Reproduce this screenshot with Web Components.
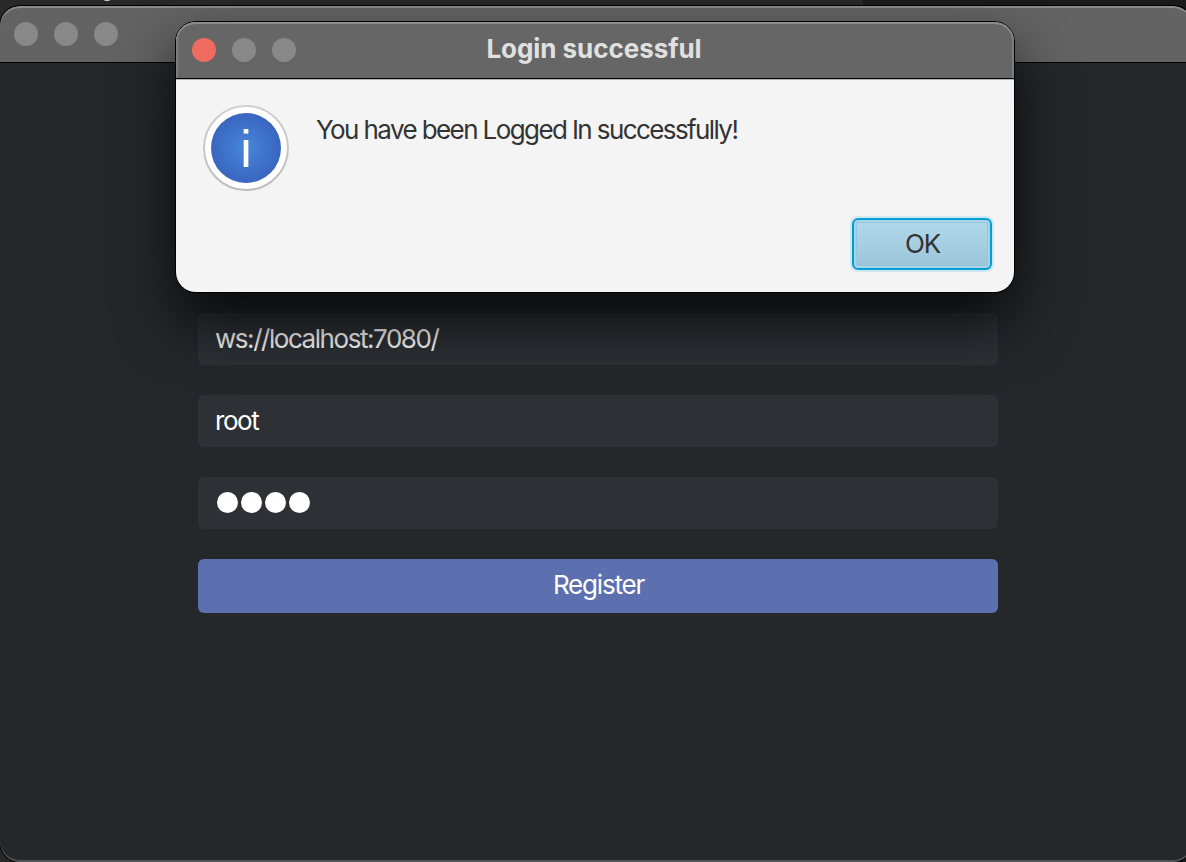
<!DOCTYPE html>
<html lang="en">
<head>
<meta charset="utf-8">
<title>Login</title>
<style>
  html, body { margin: 0; height: 100%; overflow: hidden; background: #1a1a1a; }
  body { font-family: Inter, "Liberation Sans", sans-serif; }
</style>
</head>
<body>
<app-desktop></app-desktop>
<script>
  function define(name, html) {
    const template = document.createElement('template');
    template.innerHTML = html;
    customElements.define(name, class extends HTMLElement {
      constructor() {
        super();
        this.attachShadow({ mode: 'open' }).appendChild(template.content.cloneNode(true));
      }
    });
  }

  define('traffic-lights', `
    <style>
      :host { display: flex; gap: 16px; }
      i { width: 24px; height: 24px; border-radius: 50%; background: var(--dot, #888); }
      i:first-of-type { background: var(--close, var(--dot, #888)); }
    </style><i></i><i></i><i></i>`);

  define('text-input', `
    <style>
      :host { display: flex; align-items: center; box-sizing: border-box; height: 52px; padding: 0 17px;
        border-radius: 6px; background: #2d3035; color: #fff; font-size: 26px; line-height: 32px; letter-spacing: -1.45px; white-space: nowrap; }
    </style><slot></slot>`);

  define('password-dots', `
    <style>
      :host { display: flex; gap: 3.1px; margin: -1px 0 0 1.6px; }
      i { width: 21px; height: 21px; border-radius: 50%; background: #fff; }
    </style><i></i><i></i><i></i><i></i>`);

  define('primary-button', `
    <style>
      :host { display: flex; align-items: center; justify-content: center; box-sizing: border-box; height: 54px; padding: 0 0 2px 1px; border-radius: 6px;
        background: #5c6fae; color: #fff; font-size: 26px; line-height: 32px; letter-spacing: -1.2px; }
    </style><slot></slot>`);

  define('ok-button', `
    <style>
      :host { display: flex; align-items: center; justify-content: center; box-sizing: border-box; width: 140px; height: 52px; padding: 0 0 2px 1px;
        border: 2px solid #039ed3; border-radius: 6px; color: #333; font-size: 26px; letter-spacing: -1.1px;
        background: linear-gradient(#b0daec, #9bc3d7);
        box-shadow: 0 0 0 2px #cfe7f0, inset 0 0 0 2px #a9d3e5, inset 0 0 0 3px #95c6dd; }
    </style><slot></slot>`);

  define('info-icon', `
    <style>:host { display: block; width: 86px; height: 86px; } svg { display: block; }</style>
    <svg width="86" height="86" viewBox="0 0 86 86">
      <defs>
        <radialGradient id="b"><stop offset="0" stop-color="#4787d8"/><stop offset="1" stop-color="#3966c0"/></radialGradient>
        <linearGradient id="r" x2="0" y2="1"><stop offset="0" stop-color="#d0d0d0"/><stop offset="1" stop-color="#bcbcbc"/></linearGradient>
      </defs>
      <circle cx="43" cy="43" r="42" fill="#fff" stroke="url(#r)" stroke-width="2"/>
      <circle cx="43" cy="43" r="35" fill="url(#b)"/>
      <text x="43" y="62" text-anchor="middle" font-family="Liberation Sans" font-size="52" fill="#fff">i</text>
    </svg>`);

  define('login-window', `
    <style>
      :host { display: flex; flex-direction: column; box-sizing: border-box; width: 1193px; height: 856px; margin-top: 6px;
        border-radius: 20px; overflow: hidden; background: #24282b; position: relative; z-index: 0; box-shadow: 0 0 0 1px #000; }
      :host::after { content: ""; position: absolute; inset: 0; border-radius: 20px; pointer-events: none;
        box-shadow: inset 0 -2px 0 #505254; }
      header { position: relative; z-index: 1; display: flex; align-items: center; box-sizing: border-box; height: 57px; padding-left: 14px; flex: none;
        background: #636363; border-bottom: 1px solid #000; border-radius: 20px 20px 0 0; box-shadow: inset 0 2px 0 #8b8b8b; }
      main { display: flex; flex-direction: column; gap: 30px; width: 800px; padding: 250px 0 0 198px; }
    </style>
    <header><traffic-lights></traffic-lights></header>
    <main>
      <text-input>ws://localhost:7080/</text-input>
      <text-input>root</text-input>
      <text-input><password-dots></password-dots></text-input>
      <primary-button>Register</primary-button>
    </main>`);

  define('alert-dialog', `
    <style>
      :host { position: absolute; z-index: 2; left: 176px; top: 22px; width: 838px; height: 270px; display: flex; flex-direction: column;
        border-radius: 20px; background: #f4f4f4;
        box-shadow: 0 0 0 1px #000, 0 30px 60px rgba(0,0,0,.78); }
      header { display: grid; grid-template-columns: 1fr auto 1fr; align-items: center; box-sizing: border-box; height: 57px; padding: 0 16px; flex: none;
        background: #666; border-bottom: 1px solid #000; border-radius: 20px 20px 0 0;
        box-shadow: inset 0 2px 0 #8c8c8c, inset 2px 0 0 #7d7d7d, inset -2px 0 0 #7d7d7d, 0 1px 0 #b5b5b5; }
      h1 { margin: 0; font-size: 26px; line-height: 32px; font-weight: 700; color: #e0e0e0; letter-spacing: -.05px; position: relative; top: -1px; left: -1px; white-space: nowrap; }
      traffic-lights { --close: #ed6b5f; }
      section { display: flex; gap: 27px; padding: 26px 27px 0; }
      p { margin: 9px 0 0; font-size: 26px; line-height: 32px; color: #333; letter-spacing: -1.6px; white-space: nowrap; }
      footer { display: flex; justify-content: flex-end; margin-top: auto; padding: 0 22px 22px; }
    </style>
    <header><traffic-lights></traffic-lights><h1><slot name="title"></slot></h1><span></span></header>
    <section><info-icon></info-icon><p><slot></slot></p></section>
    <footer><ok-button>OK</ok-button></footer>`);

  define('app-desktop', `
    <style>
      :host { display: flow-root; position: relative; width: 1186px; height: 862px; overflow: hidden;
        background: linear-gradient(90deg, #282828 863px, #1a1a1a 863px); }
      b { position: absolute; left: 103px; top: -5px; width: 8px; height: 6px; border-radius: 50%; background: #d8dce0; }
    </style>
    <b></b>
    <login-window></login-window>
    <alert-dialog><span slot="title">Login successful</span>You have been Logged In successfully!</alert-dialog>`);
</script>
</body>
</html>
